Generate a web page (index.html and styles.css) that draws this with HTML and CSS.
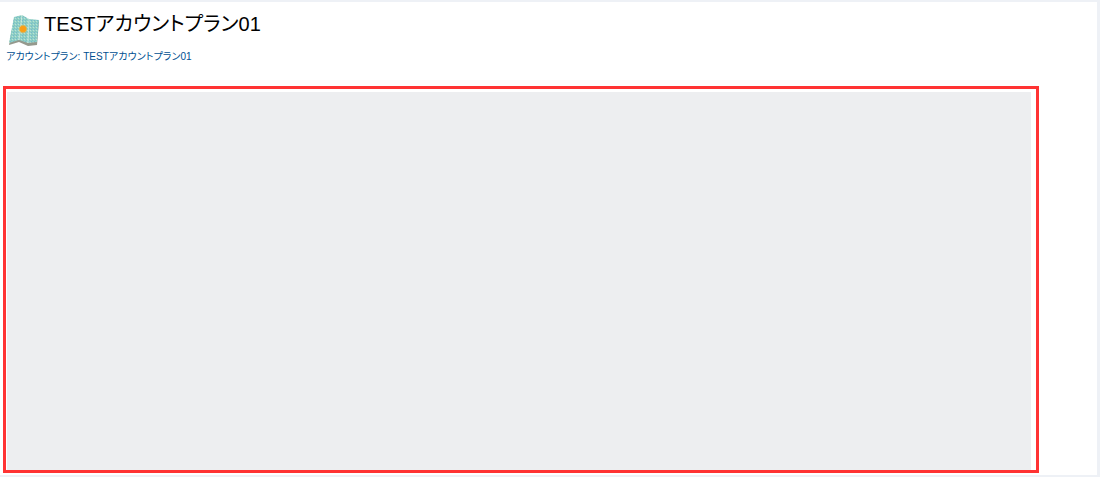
FILE: index.html
```html
<!DOCTYPE html>
<html lang="ja">
<head>
<meta charset="utf-8">
<title>TESTアカウントプラン01</title>
<link rel="stylesheet" href="styles.css">
</head>
<body>
<main class="panel">
  <header class="head">
    <svg class="icon" viewBox="0 0 32 32" aria-hidden="true">
      <defs>
        <pattern id="speck" width="3" height="3" patternUnits="userSpaceOnUse">
          <rect width="3" height="3" fill="#8fcfc6"/>
          <rect width="1" height="1" fill="#74b8cc"/>
          <rect x="2" y="1" width="1" height="1" fill="#b9e2d4"/>
          <rect x="1" y="2" width="1" height="1" fill="#7fc4bc"/>
        </pattern>
        <radialGradient id="sun">
          <stop offset="0" stop-color="#ff9a10"/>
          <stop offset="0.65" stop-color="#f7a21c"/>
          <stop offset="1" stop-color="#e8c060" stop-opacity="0.2"/>
        </radialGradient>
        <filter id="soft" x="-10%" y="-10%" width="120%" height="120%">
          <feGaussianBlur stdDeviation="0.45"/>
        </filter>
      </defs>
      <g filter="url(#soft)">
        <path d="M2 31 L7 5 L15 2 L22 6 L32 7 L30 31 L21 32 L12 28 Z" fill="#7b7f70" opacity="0.8"/>
        <path d="M2 29 L7 3 L15 1 L22 5 L32 6 L30 28 L21 29 L12 26 Z" fill="url(#speck)"/>
        <path d="M15 1 L12 26 M22 5 L21 29" stroke="#d8efe6" stroke-width="1" fill="none" opacity="0.7"/>
        <circle cx="16" cy="15" r="4.500" fill="url(#sun)"/>
      </g>
    </svg>
    <h1 class="title">TESTアカウントプラン01</h1>
  </header>
  <nav class="crumb"><a class="crumb-link" href="#">アカウントプラン: TESTアカウントプラン01</a></nav>
  <section class="frame">
    <div class="placeholder"></div>
  </section>
</main>
</body>
</html>
```
FILE: styles.css
```css
html, body {
  margin: 0;
  height: 100%;
}
body {
  background: #eef1f6;
  padding: 2px 3px 2px 0;
  box-sizing: border-box;
  overflow: hidden;
  font-family: "Liberation Sans", "Noto Sans CJK JP", sans-serif;
  font-feature-settings: "palt";
}
.panel {
  background: #fff;
  height: 473px;
  display: flex;
  flex-direction: column;
}
.head {
  display: flex;
  align-items: flex-start;
  padding: 10px 0 0 7px;
  height: 34px;
}
.icon {
  width: 32px;
  height: 32px;
  margin-top: 2px;
  flex: none;
}
.title {
  margin: 0 0 0 5px;
  font-size: 20px;
  font-weight: 400;
  line-height: 24px;
  letter-spacing: 0.14px;
  color: #000;
}
.crumb {
  padding: 3px 0 0 6px;
  font-size: 10px;
  line-height: 16px;
  height: 16px;
  letter-spacing: 0.07px;
}
.crumb-link {
  color: #004f91;
  text-decoration: none;
}
.frame {
  box-sizing: border-box;
  width: 1036px;
  height: 387px;
  margin: 21px 0 0 3px;
  border: 3px solid #ff3333;
  padding: 3px 5px 0 1px;
  background: #fff;
}
.placeholder {
  height: 100%;
  background: #edeef0;
}
```
